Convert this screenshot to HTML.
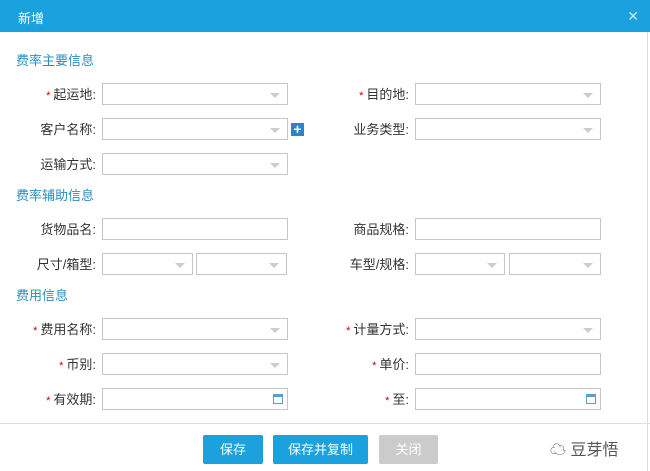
<html><head><style>
body{margin:0;width:650px;height:471px;background:#fff;font-family:"Liberation Sans","Noto Sans CJK SC",sans-serif;position:relative;overflow:hidden;font-size:13px;color:#333}
.hd{position:absolute;left:0;top:0;width:650px;height:32px;background:#1ba1de;color:#fff;font-size:13px}
.hd span{position:absolute;left:18px;top:8px}
.x{position:absolute;right:11px;top:8px;font-size:14px;color:#cfe9f7}
.sec{position:absolute;left:16px;color:#2a8fc4;font-size:13px}
.lb{position:absolute;width:90px;text-align:right;font-size:13px}
.lb b{color:#c00;font-weight:normal;font-size:11px;margin-right:3px}
.in{position:absolute;height:22px;border:1px solid #c6c6c6;box-sizing:border-box;background:#fff}
.in.s:after{content:"";position:absolute;right:7px;top:9px;border-left:5px solid transparent;border-right:5px solid transparent;border-top:5px solid #ccc}
.cal{position:absolute;right:4px;top:5px;width:10px;height:10px;border:1px solid #5aa0c8;border-top-width:3px;box-sizing:border-box}
.ft{position:absolute;left:0;top:423px;width:650px;border-top:1px solid #ddd}
.bt{position:absolute;top:435px;height:29px;color:#fff;font-size:13px;text-align:center;line-height:29px;border-radius:2px;background:#1ba1de}
.plus{position:absolute;left:291px;top:123px;width:13px;height:13px;background:#2a86c6;color:#fff;font-weight:bold;font-size:14px;line-height:13px;text-align:center}
.rb{position:absolute;left:647px;top:32px;width:1px;height:439px;background:#ddd}
</style></head><body>
<div class="hd"><span>新增</span><div class="x">✕</div></div>
<div class="rb"></div>
<div class="sec" style="top:50px">费率主要信息</div>
<div class="sec" style="top:185px">费率辅助信息</div>
<div class="sec" style="top:285px">费用信息</div>

<div class="lb" style="left:6px;top:84px"><b>*</b>起运地:</div>
<div class="in s" style="left:102px;top:83px;width:186px"></div>
<div class="lb" style="left:319px;top:84px"><b>*</b>目的地:</div>
<div class="in s" style="left:415px;top:83px;width:186px"></div>

<div class="lb" style="left:6px;top:119px">客户名称:</div>
<div class="in s" style="left:102px;top:118px;width:186px"></div>
<div class="plus">+</div>
<div class="lb" style="left:319px;top:119px">业务类型:</div>
<div class="in s" style="left:415px;top:118px;width:186px"></div>

<div class="lb" style="left:6px;top:154px">运输方式:</div>
<div class="in s" style="left:102px;top:153px;width:186px"></div>

<div class="lb" style="left:6px;top:219px">货物品名:</div>
<div class="in" style="left:102px;top:218px;width:186px"></div>
<div class="lb" style="left:319px;top:219px">商品规格:</div>
<div class="in" style="left:415px;top:218px;width:186px"></div>

<div class="lb" style="left:6px;top:254px">尺寸/箱型:</div>
<div class="in s" style="left:102px;top:253px;width:91px"></div>
<div class="in s" style="left:196px;top:253px;width:91px"></div>
<div class="lb" style="left:319px;top:254px">车型/规格:</div>
<div class="in s" style="left:415px;top:253px;width:90px"></div>
<div class="in s" style="left:509px;top:253px;width:92px"></div>

<div class="lb" style="left:6px;top:319px"><b>*</b>费用名称:</div>
<div class="in s" style="left:102px;top:318px;width:186px"></div>
<div class="lb" style="left:319px;top:319px"><b>*</b>计量方式:</div>
<div class="in s" style="left:415px;top:318px;width:186px"></div>

<div class="lb" style="left:6px;top:354px"><b>*</b>币别:</div>
<div class="in s" style="left:102px;top:353px;width:186px"></div>
<div class="lb" style="left:319px;top:354px"><b>*</b>单价:</div>
<div class="in" style="left:415px;top:353px;width:186px"></div>

<div class="lb" style="left:6px;top:389px"><b>*</b>有效期:</div>
<div class="in" style="left:102px;top:388px;width:186px"><div class="cal"></div></div>
<div class="lb" style="left:319px;top:389px"><b>*</b>至:</div>
<div class="in" style="left:415px;top:388px;width:186px"><div class="cal"></div></div>

<div class="ft"></div>
<div class="bt" style="left:203px;width:60px">保存</div>
<div class="bt" style="left:273px;width:95px">保存并复制</div>
<div class="bt" style="left:379px;width:59px;background:#cbcbcb">关闭</div>
<div style="position:absolute;left:550px;top:436px;font-size:16px;color:#555">☁ 豆芽悟</div>
</body></html>
